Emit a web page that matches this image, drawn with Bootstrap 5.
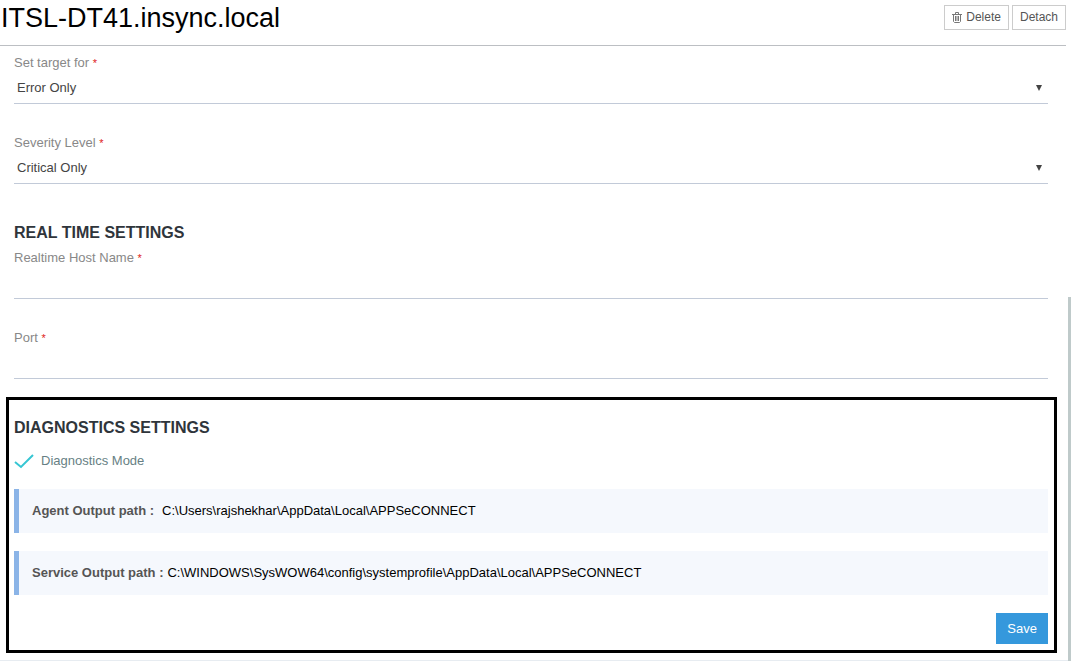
<!DOCTYPE html>
<html lang="en">
<head>
<meta charset="utf-8">
<meta name="viewport" content="width=device-width, initial-scale=1">
<title>ITSL-DT41.insync.local</title>
<link href="https://cdn.jsdelivr.net/npm/bootstrap@5.3.0/dist/css/bootstrap.min.css" rel="stylesheet">
<style>
  body { font-family: "Liberation Sans", Arial, sans-serif; font-size: 13px; line-height: 20px; color: #444; background: #fff; }
  .agent-header { border-bottom: 1px solid #bcbfc3; height: 46px; padding: 2px 0 0 1px; margin-right: 5px; }
  .agent-header h1 { font-size: 27px; line-height: 32px; color: #000; }
  .header-actions { gap: 3px; }
  .btn-plain { --bs-btn-color: #555; --bs-btn-border-color: #ccc; --bs-btn-border-radius: 0; --bs-btn-font-size: 12px; --bs-btn-line-height: 17px; --bs-btn-padding-x: 7px; --bs-btn-padding-y: 3px; height: 25px; margin-top: 3px; }
  .btn-save { --bs-btn-color: #fff; --bs-btn-bg: #3598dc; --bs-btn-hover-color: #fff; --bs-btn-hover-bg: #217ebd; --bs-btn-border-width: 0; --bs-btn-border-radius: 0; --bs-btn-font-size: 13px; --bs-btn-padding-x: 11px; --bs-btn-padding-y: 5px; --bs-btn-line-height: 21px; }
  .settings { padding: 7px 23px 0 14px; }
  .line-field { margin-bottom: 29px; }
  .line-field label { display: block; color: #888; height: 20px; }
  .req { color: #e02222; font-size: 11px; }
  .line-field .form-control, .line-field .form-select { font-size: 13px; line-height: 20px; color: #444; height: 31px; padding: 5px 3px; border: 0; border-bottom: 1px solid #c2cad8; border-radius: 0; background-color: transparent; }
  .line-field .form-select { background-image: url("data:image/svg+xml,%3Csvg xmlns='http://www.w3.org/2000/svg' viewBox='0 0 6 6'%3E%3Cpath fill='%23444' d='M0 0h6L3 6z'/%3E%3C/svg%3E"); background-size: 6px 6px; background-position: right 6px top 12px; }
  .section-title { font-size: 16px; line-height: 20px; font-weight: 700; color: #2f353b; margin: 0; }
  .realtime-title { padding-top: 10px; margin-bottom: 5px; }
  .diagnostics { border: 3px solid #000; margin: 18px 14px 0 6px; padding: 18px 6px 6px 5px; }
  .mode-row { margin: 13px 0 18px; }
  .mode-check { appearance: none; width: 20px; height: 16px; margin: 0 7px 0 0; border: 0; background: transparent; }
  .mode-check:checked { background: url("data:image/svg+xml,%3Csvg xmlns='http://www.w3.org/2000/svg' viewBox='0 0 20 16'%3E%3Cpath fill='none' stroke='%2336c6d3' stroke-width='2' d='M1 9l6 5L19 2'/%3E%3C/svg%3E") no-repeat; }
  .mode-label { color: #677f84; }
  .path-note { background: #f5f8fd; border-left: 5px solid #8bb4e7; height: 44px; padding: 0 13px; margin-bottom: 18px; color: #000; }
  .path-note strong { color: #555; }
  .page-end { border-top: 1px solid #e7ecf1; margin-top: 7px; }
  .scroll-thumb { position: fixed; right: 0; top: 45%; bottom: 0; width: 3px; background: #bfcaca; }
</style>
</head>
<body>
<header class="agent-header d-flex justify-content-between align-items-start">
  <h1 class="m-0 fw-normal">ITSL-DT41.insync.local</h1>
  <div class="header-actions d-flex">
    <button type="button" class="btn btn-plain d-flex align-items-center"><svg class="me-1" width="10" height="11" viewBox="0 0 10 11" fill="none" stroke="#777" aria-hidden="true"><path d="M0 2.5h10M3.500 2V.5h3V2M1.500 3v6.500l1 1h5l1-1V3M3.500 4v5M5 4v5M6.500 4v5"/></svg>Delete</button>
    <button type="button" class="btn btn-plain">Detach</button>
  </div>
</header>
<main>
  <form>
    <div class="settings">
      <div class="line-field">
        <label for="target">Set target for <span class="req">*</span></label>
        <select id="target" class="form-select"><option>Error Only</option></select>
      </div>
      <div class="line-field">
        <label for="severity">Severity Level <span class="req">*</span></label>
        <select id="severity" class="form-select"><option>Critical Only</option></select>
      </div>
      <h2 class="section-title realtime-title">REAL TIME SETTINGS</h2>
      <div class="line-field">
        <label for="host">Realtime Host Name <span class="req">*</span></label>
        <input id="host" type="text" class="form-control">
      </div>
      <div class="line-field mb-0">
        <label for="port">Port <span class="req">*</span></label>
        <input id="port" type="text" class="form-control">
      </div>
    </div>
    <section class="diagnostics">
      <h2 class="section-title">DIAGNOSTICS SETTINGS</h2>
      <div class="d-flex align-items-center mode-row">
        <input id="mode" type="checkbox" class="mode-check" checked>
        <label for="mode" class="mode-label">Diagnostics Mode</label>
      </div>
      <div class="path-note d-flex align-items-center"><strong class="me-2">Agent Output path :</strong><span>C:\Users\rajshekhar\AppData\Local\APPSeCONNECT</span></div>
      <div class="path-note d-flex align-items-center"><strong class="me-1">Service Output path :</strong><span>C:\WINDOWS\SysWOW64\config\systemprofile\AppData\Local\APPSeCONNECT</span></div>
      <div class="d-flex justify-content-end"><button type="submit" class="btn btn-save">Save</button></div>
    </section>
  </form>
</main>
<footer class="page-end"></footer>
<div class="scroll-thumb" aria-hidden="true"></div>
<script src="https://cdn.jsdelivr.net/npm/bootstrap@5.3.0/dist/js/bootstrap.bundle.min.js"></script>
</body>
</html>
